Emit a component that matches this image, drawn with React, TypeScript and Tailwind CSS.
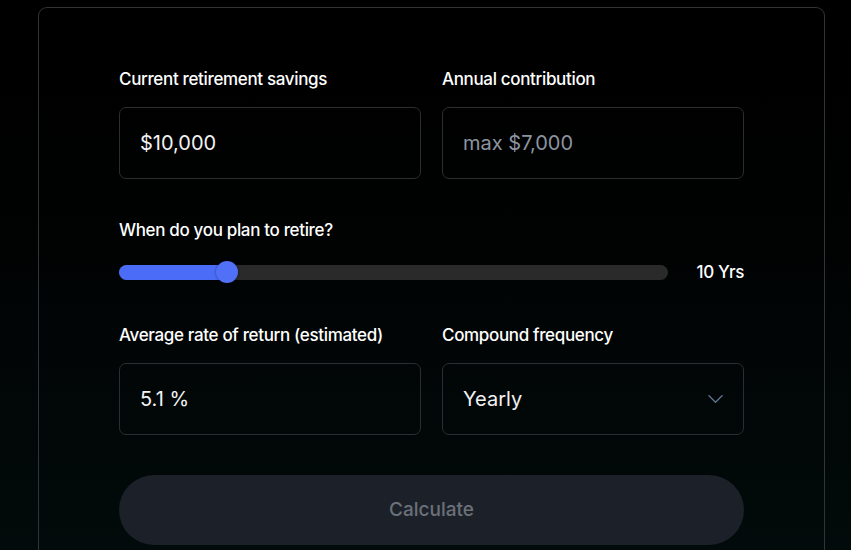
import { useState } from 'react';

function Field({ label, children }: { label: string; children: React.ReactNode }) {
  return (
    <div className="flex flex-col">
      <label className="text-[17px] leading-6 font-medium tracking-[-0.02em] text-white">{label}</label>
      <div className="mt-4">{children}</div>
    </div>
  );
}

export default function App() {
  const [savings, setSavings] = useState('$10,000');
  const [contribution, setContribution] = useState('');
  const [years, setYears] = useState(10);
  const [rate, setRate] = useState('5.1 %');

  // slider goes 0..50 years
  const pct = (years / 50) * 98.5;

  return (
    <div
      className="min-h-[550px] w-full bg-gradient-to-b from-[#000000] via-[#010404] to-[#020b0b] pt-[7px] pl-[38px]"
      style={{ fontFamily: 'Inter, "Liberation Sans", sans-serif' }}
    >
      <div className="h-[560px] w-[787px] rounded-[9px] border border-b-0 border-[#313436] px-[80px] pt-[59px]">
        <div className="grid grid-cols-2 gap-x-[21px]">
          <Field label="Current retirement savings">
            <input
              value={savings}
              onChange={(e) => setSavings(e.target.value)}
              className="h-[72px] w-full rounded-[7px] border border-[#2b2d30] bg-transparent px-[20px] text-[20px] text-[#f2f2f2] outline-none"
            />
          </Field>
          <Field label="Annual contribution">
            <input
              value={contribution}
              onChange={(e) => setContribution(e.target.value)}
              placeholder="max $7,000"
              className="h-[72px] w-full rounded-[7px] border border-[#2b2d30] bg-transparent px-[20px] text-[20px] text-[#f2f2f2] placeholder:text-[#8b95a1] outline-none"
            />
          </Field>
        </div>

        <div className="mt-[39px]">
          <label className="block text-[17px] leading-6 font-medium tracking-[-0.02em] text-white">
            When do you plan to retire?
          </label>
          <div className="mt-[18px] flex h-6 items-center">
            <div className="relative h-[15px] w-[549px] rounded-full bg-[#2a2a2a]">
              <div className="h-full rounded-full bg-[#4a6cf6]" style={{ width: `${pct}%` }} />
              <div
                className="absolute top-1/2 h-[22px] w-[22px] -translate-x-1/2 -translate-y-1/2 rounded-full bg-[#5070f7] shadow-[0_0_3px_rgba(0,0,0,0.4)]"
                style={{ left: `${pct}%` }}
              />
              <input
                type="range"
                min={0}
                max={50}
                value={years}
                onChange={(e) => setYears(Number(e.target.value))}
                className="absolute inset-0 w-full cursor-pointer opacity-0"
              />
            </div>
            <span className="ml-auto text-[17px] leading-6 font-medium tracking-[-0.02em] text-white">
              {years} Yrs
            </span>
          </div>
        </div>

        <div className="mt-[39px] grid grid-cols-2 gap-x-[21px]">
          <Field label="Average rate of return (estimated)">
            <input
              value={rate}
              onChange={(e) => setRate(e.target.value)}
              className="h-[72px] w-full rounded-[7px] border border-[#2b2d30] bg-transparent px-[20px] text-[20px] text-[#f2f2f2] outline-none"
            />
          </Field>
          <Field label="Compound frequency">
            <div className="relative flex h-[72px] w-full items-center rounded-[7px] border border-[#2b2d30] px-[20px]">
              <span className="text-[20px] text-[#f2f2f2]">Yearly</span>
              <svg
                className="absolute right-[20px] top-1/2 -translate-y-1/2"
                width="15"
                height="9"
                viewBox="0 0 15 9"
                fill="none"
              >
                <path d="M0.5 0.8 L7.5 7.8 L14.5 0.8" stroke="#5f7590" strokeWidth="1.3" />
              </svg>
            </div>
          </Field>
        </div>

        <button
          disabled
          className="mt-[40px] h-[70px] w-full rounded-full bg-[#1c2129] text-[19px] font-medium text-[#6b7079]"
        >
          Calculate
        </button>
      </div>
    </div>
  );
}
